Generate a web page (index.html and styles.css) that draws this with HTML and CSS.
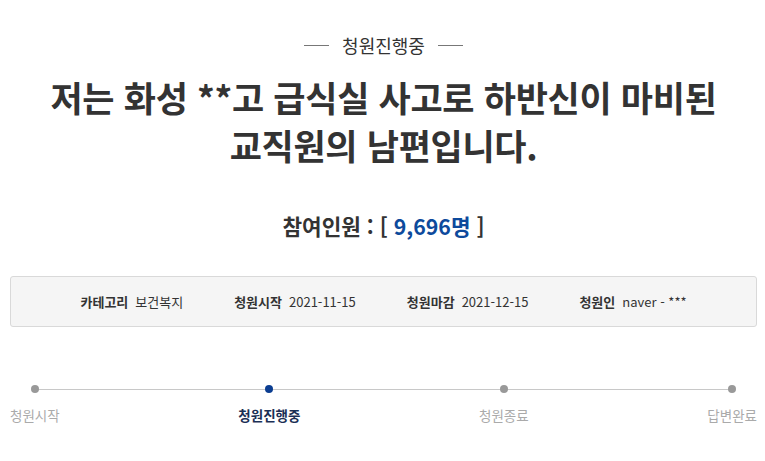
FILE: index.html
```html
<!DOCTYPE html>
<html lang="ko">
<head>
<meta charset="utf-8">
<link rel="stylesheet" href="styles.css">
</head>
<body>
<div class="page">
  <div class="status"><span class="status-line"></span><span class="status-text">청원진행중</span><span class="status-line"></span></div>
  <h1 class="title">저는 화성 **고 급식실 사고로 하반신이 마비된<br>교직원의 남편입니다.</h1>
  <div class="count">참여인원 : [ <span class="num">9,696명</span> ]</div>
  <ul class="info">
    <li><strong>카테고리</strong><span>보건복지</span></li>
    <li><strong>청원시작</strong><span>2021-11-15</span></li>
    <li><strong>청원마감</strong><span>2021-12-15</span></li>
    <li><strong>청원인</strong><span>naver - ***</span></li>
  </ul>
  <div class="progress">
    <div class="track"></div>
    <div class="step"><i class="dot"></i><span class="label">청원시작</span></div>
    <div class="step active"><i class="dot"></i><span class="label">청원진행중</span></div>
    <div class="step"><i class="dot"></i><span class="label">청원종료</span></div>
    <div class="step"><i class="dot"></i><span class="label">답변완료</span></div>
  </div>
</div>
</body>
</html>
```
FILE: styles.css
```css
* { box-sizing: border-box; }
html, body { margin: 0; padding: 0; background: #fff; }
body {
  font-family: "Noto Sans CJK KR", "Noto Sans", sans-serif;
  color: #333;
}
.page { padding: 31px 8px 0 10px; }
.status {
  display: flex;
  justify-content: center;
  align-items: center;
  gap: 13px;
  font-size: 18px;
  line-height: 28px;
  color: #333;
}
.status-line { width: 25px; height: 1px; background: #777; }
.title {
  margin: 14px 0 0;
  text-align: center;
  font-size: 35px;
  line-height: 48px;
  font-weight: 700;
  color: #333;
  letter-spacing: -0.3px;
}
.count {
  margin-top: 42px;
  text-align: center;
  font-size: 21.3px;
  line-height: 30px;
  font-weight: 700;
  color: #333;
}
.count .num { color: #0d4a9c; }
.info {
  list-style: none;
  margin: 35px 0 0;
  padding: 0;
  height: 51px;
  display: flex;
  justify-content: center;
  align-items: center;
  gap: 51px;
  background: #f5f5f5;
  border: 1px solid #d9d9d9;
  border-radius: 3px;
  font-size: 13px;
  color: #333;
}
.info li { display: flex; gap: 7px; }
.info strong { font-weight: 700; }
.progress {
  position: relative;
  margin-top: 57px;
  display: flex;
  justify-content: space-between;
}
.track {
  position: absolute;
  left: 25px;
  right: 24px;
  top: 5px;
  height: 1px;
  background: #c8c8c8;
}
.step {
  position: relative;
  display: flex;
  flex-direction: column;
  align-items: center;
  gap: 13px;
}
.dot {
  display: block;
  width: 8px;
  height: 8px;
  margin-top: 1px;
  border-radius: 50%;
  background: #999;
}
.label { font-size: 13.5px; line-height: 18px; color: #aaa; }
.step.active .dot { background: #0b3d91; }
.step.active .label { color: #1b2f55; font-weight: 700; }
```
